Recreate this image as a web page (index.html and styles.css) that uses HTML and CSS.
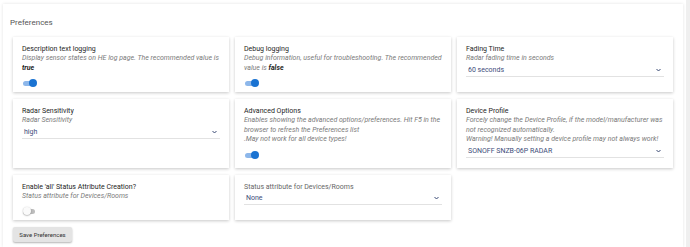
FILE: index.html
```html
<!DOCTYPE html>
<html lang="en">
<head>
  <meta charset="UTF-8">
  <title>Preferences</title>
  <link rel="stylesheet" href="styles.css">
</head>
<body>
  <div class="panel">
    <h3 class="panel-title">Preferences</h3>

    <div class="pref-grid">
      <div class="card">
        <div class="pref-title">Description text logging</div>
        <div class="pref-desc">Display sensor states on HE log page. The recommended value is <b>true</b></div>
        <span class="toggle on"><span class="knob"></span></span>
      </div>

      <div class="card">
        <div class="pref-title">Debug logging</div>
        <div class="pref-desc">Debug information, useful for troubleshooting. The recommended value is <b>false</b></div>
        <span class="toggle on"><span class="knob"></span></span>
      </div>

      <div class="card">
        <div class="pref-title">Fading Time</div>
        <div class="pref-desc">Radar fading time in seconds</div>
        <div class="select">60 seconds <svg class="chev" width="5" height="4" viewBox="0 0 5 4"><path d="M0.5 1 L2.5 3 L4.5 1" fill="none" stroke="#3b4a74" stroke-width="1"/></svg></div>
      </div>

      <div class="card">
        <div class="pref-title">Radar Sensitivity</div>
        <div class="pref-desc">Radar Sensitivity</div>
        <div class="select">high <svg class="chev" width="5" height="4" viewBox="0 0 5 4"><path d="M0.5 1 L2.5 3 L4.5 1" fill="none" stroke="#3b4a74" stroke-width="1"/></svg></div>
      </div>

      <div class="card">
        <div class="pref-title">Advanced Options</div>
        <div class="pref-desc">Enables showing the advanced options/preferences. Hit F5 in the browser to refresh the Preferences list<br>.May not work for all device types!</div>
        <span class="toggle on"><span class="knob"></span></span>
      </div>

      <div class="card">
        <div class="pref-title">Device Profile</div>
        <div class="pref-desc">Forcely change the Device Profile, if the model/manufacturer was not recognized automatically.<br>Warning! Manually setting a device profile may not always work!</div>
        <div class="select">SONOFF SNZB-06P RADAR <svg class="chev" width="5" height="4" viewBox="0 0 5 4"><path d="M0.5 1 L2.5 3 L4.5 1" fill="none" stroke="#3b4a74" stroke-width="1"/></svg></div>
      </div>

      <div class="card">
        <div class="pref-title">Enable 'all' Status Attribute Creation?</div>
        <div class="pref-desc">Status attribute for Devices/Rooms</div>
        <span class="toggle"><span class="knob"></span></span>
      </div>

      <div class="card">
        <div class="pref-label">Status attribute for Devices/Rooms</div>
        <div class="select">None <svg class="chev" width="5" height="4" viewBox="0 0 5 4"><path d="M0.5 1 L2.5 3 L4.5 1" fill="none" stroke="#3b4a74" stroke-width="1"/></svg></div>
      </div>
    </div>

    <button class="save-btn">Save Preferences</button>
  </div>
  <div class="scroll-strip"></div>
</body>
</html>
```

FILE: styles.css
```css
body {
  margin: 0;
  font-family: Roboto, "Liberation Sans", sans-serif;
  background: #fff;
  display: flex;
  height: 247px;
  overflow: hidden;
}
.panel {
  flex: 1;
  margin: 4px 3px 0 3px;
  padding: 15px 6px 0 6px;
  background: #fff;
  box-shadow: 0 0 3px rgba(0, 0, 0, 0.12);
}
.scroll-strip {
  width: 4px;
  background: #efefef;
}
.panel-title {
  margin: 0 0 10px 1px;
  font-size: 8px;
  line-height: 8px;
  font-weight: 400;
  color: #555;
}
.pref-grid {
  margin: 0 4px;
  display: grid;
  grid-template-columns: repeat(3, 1fr);
  gap: 7px 6px;
}
.card {
  background: #fff;
  padding: 8px 8px 4px 9px;
  box-shadow: 0 1px 3px rgba(0, 0, 0, 0.22);
  display: flex;
  flex-direction: column;
  align-items: flex-start;
}
.pref-title {
  font-size: 7px;
  line-height: 9px;
  font-weight: 400;
  color: #1e1e1e;
}
.pref-label {
  font-size: 7px;
  line-height: 9px;
  color: #666;
}
.pref-desc {
  font-size: 7px;
  line-height: 9.5px;
  font-style: italic;
  color: #7a7a7a;
}
.pref-desc b {
  color: #222;
}
.select {
  align-self: stretch;
  margin: 1px 1px 6px 0;
  height: 11px;
  padding-left: 2px;
  border-bottom: 1.5px solid #e2e2e2;
  font-size: 7px;
  line-height: 11px;
  color: #3d4d7a;
  display: flex;
  justify-content: space-between;
  align-items: center;
}
.chev {
  margin-right: 3px;
}
.toggle {
  position: relative;
  margin: 6px 0 0 1px;
  width: 13px;
  height: 9px;
  display: block;
}
.toggle::before {
  content: "";
  position: absolute;
  left: 0;
  top: 2px;
  width: 12px;
  height: 5px;
  border-radius: 3px;
  background: #bdbdbd;
}
.toggle .knob {
  position: absolute;
  left: 0;
  top: 0;
  width: 8px;
  height: 8px;
  border-radius: 50%;
  background: #fafafa;
  box-shadow: 0 0.5px 1.5px rgba(0, 0, 0, 0.4);
}
.toggle.on::before {
  background: #8db7ea;
}
.toggle.on .knob {
  left: 6px;
  background: #1a73d2;
  box-shadow: none;
}
.save-btn {
  margin: 7px 0 0 4px;
  width: 59px;
  height: 15px;
  padding: 0;
  border: none;
  border-radius: 2px;
  background: #e4e4e4;
  box-shadow: 0 1px 2px rgba(0, 0, 0, 0.3);
  font-family: Roboto, "Liberation Sans", sans-serif;
  font-size: 6px;
  color: #333;
}
```
